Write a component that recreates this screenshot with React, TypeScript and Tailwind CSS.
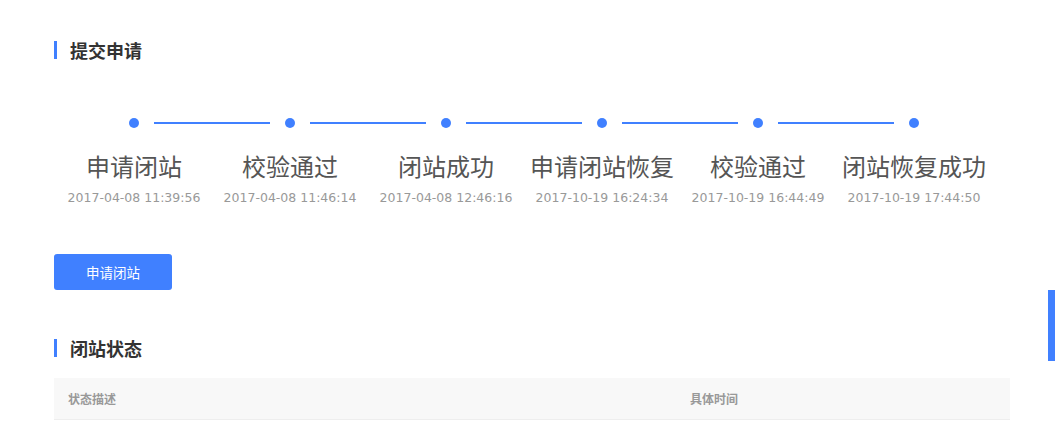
import React from "react";

const steps = [
  { title: "申请闭站", time: "2017-04-08 11:39:56" },
  { title: "校验通过", time: "2017-04-08 11:46:14" },
  { title: "闭站成功", time: "2017-04-08 12:46:16" },
  { title: "申请闭站恢复", time: "2017-10-19 16:24:34" },
  { title: "校验通过", time: "2017-10-19 16:44:49" },
  { title: "闭站恢复成功", time: "2017-10-19 17:44:50" },
];

function Heading({ text }: { text: string }) {
  return (
    <div className="flex items-center h-[18px]">
      <div className="w-[3px] h-[18px] bg-[#4080ff]" />
      <div className="ml-[13px] text-[18px] leading-[18px] font-bold text-[#333]">{text}</div>
    </div>
  );
}

export default function App() {
  return (
    <div
      className="relative w-[1055px] h-[442px] bg-white overflow-hidden"
      style={{ fontFamily: '"Noto Sans CJK SC", "Noto Sans", sans-serif' }}
    >
      <div className="pl-[54px] pt-[41px]">
        <Heading text="提交申请" />

        {/* dots and lines */}
        <div className="flex items-center mt-[59px] pl-[75px] h-[10px]">
          {steps.map((_, i) => (
            <div key={i} className="flex items-center">
              <div className="w-[10px] h-[10px] rounded-full bg-[#4080ff]" />
              {i < steps.length - 1 && <div className="mx-[15px] w-[116px] h-[2px] bg-[#4080ff]" />}
            </div>
          ))}
        </div>

        {/* titles and times */}
        <div className="grid grid-cols-[repeat(6,156px)] ml-[2px] mt-[22px]">
          {steps.map((s, i) => (
            <div key={i} className="flex flex-col items-center">
              <div className="text-[24px] leading-[32px] text-[#555]">{s.title}</div>
              <div
                className="mt-[7px] text-[12.5px] leading-[18px] text-[#999] whitespace-nowrap"
                style={{ fontFamily: '"DejaVu Sans", Verdana, sans-serif' }}
              >
                {s.time}
              </div>
            </div>
          ))}
        </div>

        <button className="mt-[47px] w-[118px] h-[36px] rounded-[3px] bg-[#4080ff] text-white text-[13.5px] flex items-center justify-center">
          申请闭站
        </button>

        <div className="mt-[49px]">
          <Heading text="闭站状态" />
        </div>

        <div className="mt-[21px] w-[956px] h-[42px] bg-[#f8f8f8] border-b border-[#eeeeee] flex items-center text-[12px] font-bold text-[#999]">
          <div className="pl-[14px] w-[636px]">状态描述</div>
          <div>具体时间</div>
        </div>
      </div>

      <div className="absolute right-0 top-[290px] w-[7px] h-[71px] bg-[#4080ff]" />
    </div>
  );
}
